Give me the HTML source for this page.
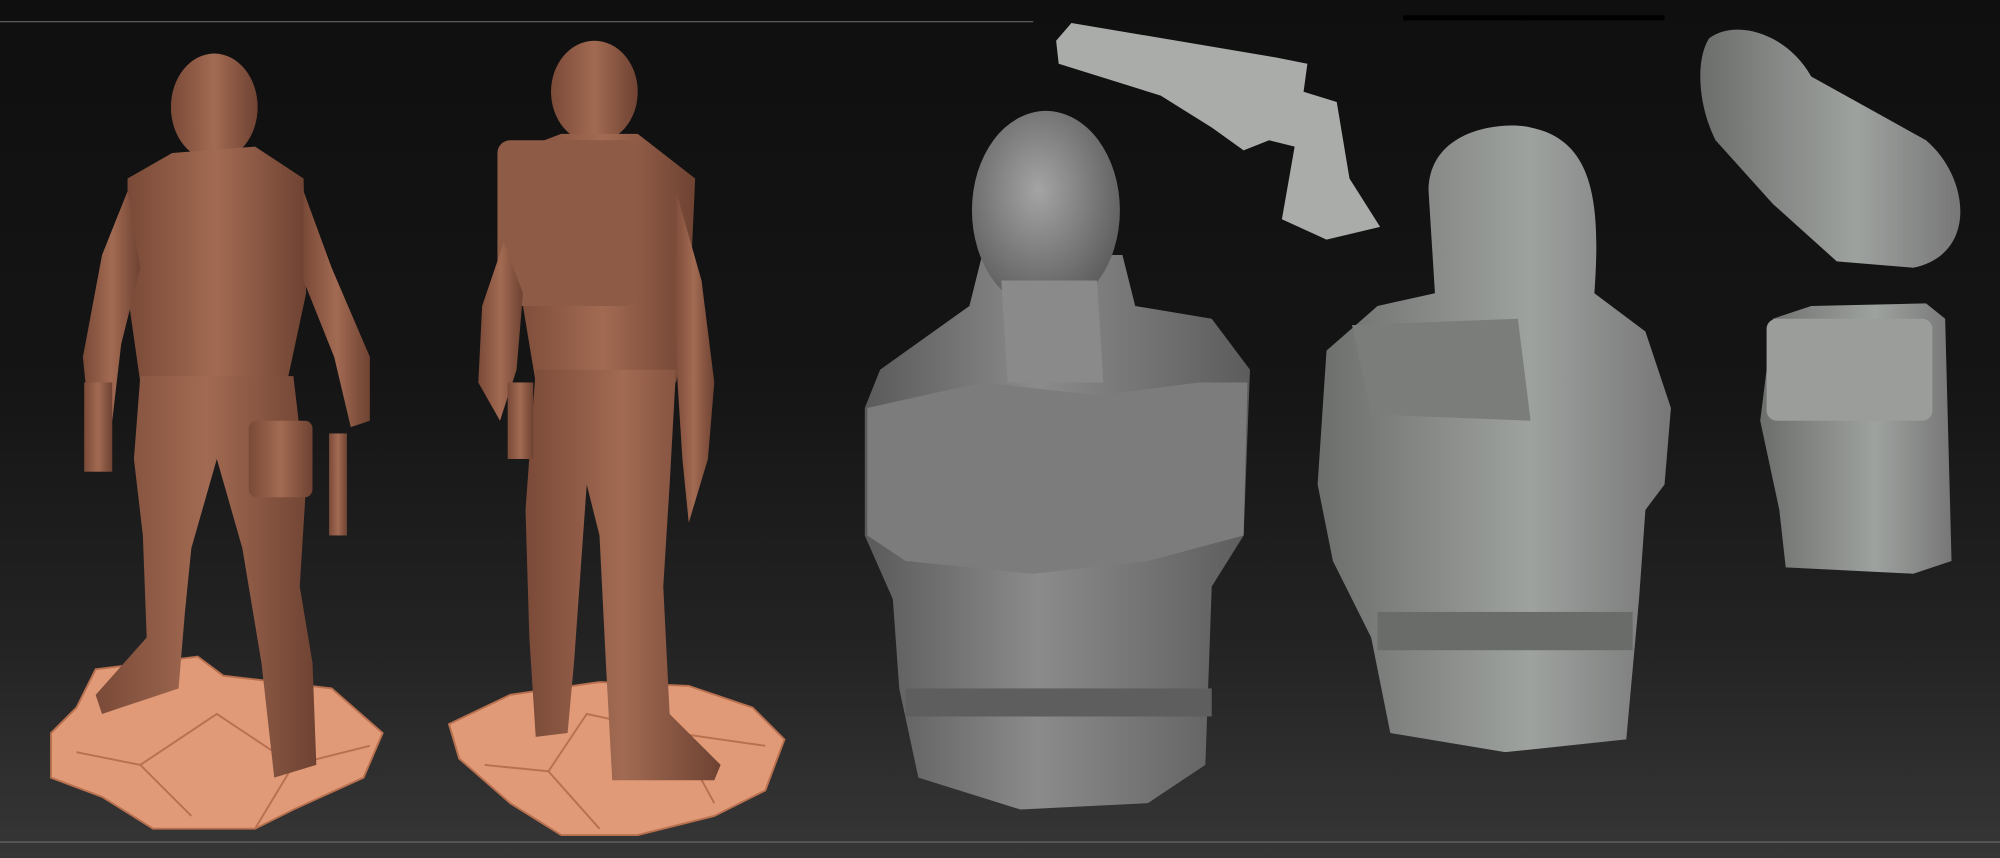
<!DOCTYPE html>
<html><head><meta charset="utf-8"><style>
html,body{margin:0;padding:0;background:#141414;overflow:hidden}
svg{display:block}
</style></head><body>
<svg width="2000" height="858" viewBox="0 0 1568 673" preserveAspectRatio="none" xmlns="http://www.w3.org/2000/svg">
<defs>
<linearGradient id="bg" x1="0" y1="0" x2="0" y2="1">
<stop offset="0" stop-color="#0f0f0f"/><stop offset="0.45" stop-color="#151515"/><stop offset="0.75" stop-color="#232323"/><stop offset="1" stop-color="#363636"/></linearGradient>
<linearGradient id="ter" x1="0" y1="0" x2="1" y2="0">
<stop offset="0" stop-color="#7a4a38"/><stop offset="0.5" stop-color="#a26a52"/><stop offset="1" stop-color="#6e4232"/></linearGradient>
<linearGradient id="gr" x1="0" y1="0" x2="1" y2="0">
<stop offset="0" stop-color="#5a5a5a"/><stop offset="0.45" stop-color="#8a8b8a"/><stop offset="1" stop-color="#5c5c5c"/></linearGradient>
<linearGradient id="gr2" x1="0" y1="0" x2="1" y2="0">
<stop offset="0" stop-color="#6c6e6c"/><stop offset="0.6" stop-color="#9ea29f"/><stop offset="1" stop-color="#777"/></linearGradient>
<radialGradient id="head" cx="0.45" cy="0.4" r="0.6"><stop offset="0" stop-color="#a4a4a4"/><stop offset="1" stop-color="#5e5e5e"/></radialGradient>
</defs>
<rect width="1568" height="673" fill="url(#bg)"/>
<rect x="0" y="16.5" width="810" height="1" fill="#5a5a5a"/>
<rect x="0" y="660" width="1568" height="1" fill="#666"/>
<rect x="1100" y="12" width="205" height="4" fill="#000"/>

<g fill="#e09a78" stroke="#b8704f" stroke-width="1.5">
<path d="M75 525 L155 515 L175 530 L260 540 L300 575 L285 610 L230 635 L200 650 L120 650 L80 625 L40 610 L40 575 L60 555 Z"/>
<path d="M400 545 L470 535 L540 538 L590 555 L615 580 L600 620 L560 640 L500 655 L440 655 L400 630 L360 595 L352 568 Z"/>
</g>
<g stroke="#b8704f" stroke-width="1.5" fill="none">
<path d="M60 590 L110 600 L150 640 M110 600 L170 560 L230 600 L200 650 M230 600 L290 585"/>
<path d="M380 600 L430 605 L470 650 M430 605 L460 560 L530 575 L560 630 M530 575 L600 585"/>
</g>
<g fill="url(#ter)">
<ellipse cx="168" cy="84" rx="34" ry="42"/>
<path d="M100 140 L135 120 L200 115 L238 140 L240 230 L225 300 L110 300 L100 230 Z"/>
<path d="M100 150 L80 200 L65 280 L70 330 L88 330 L95 270 L110 210 Z"/>
<path d="M238 150 L260 210 L290 280 L290 330 L275 335 L262 280 L238 220 Z"/>
<path d="M110 295 L230 295 L240 380 L235 460 L245 520 L248 600 L215 610 L205 520 L190 430 L170 360 L150 430 L145 480 L140 540 L80 560 L75 545 L115 500 L112 420 L105 360 Z"/>
<rect x="195" y="330" width="50" height="60" rx="6"/>
<rect x="66" y="300" width="22" height="70"/>
<rect x="258" y="340" width="14" height="80"/>
</g>
<g fill="url(#ter)">
<ellipse cx="466" cy="72" rx="34" ry="40"/>
<path d="M400 120 L440 105 L500 105 L545 140 L540 250 L530 300 L420 300 L410 240 Z"/>
<rect x="390" y="110" width="110" height="130" rx="10" fill="#8d5b46"/>
<path d="M395 190 L378 240 L375 300 L392 330 L405 290 L410 230 Z"/>
<path d="M530 150 L550 220 L560 300 L555 360 L540 410 L535 360 L528 250 Z"/>
<path d="M420 290 L530 290 L525 380 L520 460 L525 560 L565 600 L560 612 L480 612 L475 520 L470 420 L460 380 L455 450 L450 520 L445 575 L420 578 L415 500 L412 400 Z"/>
<rect x="398" y="300" width="20" height="60"/>
</g>
<path d="M690 290 L760 240 L770 200 L880 200 L890 240 L950 250 L980 290 L975 420 L950 460 L945 600 L900 630 L800 635 L720 610 L705 540 L700 470 L678 420 L678 320 Z" fill="url(#gr)"/>
<path d="M680 320 L770 300 L860 310 L940 300 L978 300 L975 420 L900 440 L810 450 L710 440 L680 420 Z" fill="#7b7c7b"/>
<ellipse cx="820" cy="165" rx="58" ry="78" fill="url(#head)"/>
<path d="M785 220 L860 220 L865 300 L790 300 Z" fill="#8a8a8a"/>
<rect x="710" y="540" width="240" height="22" fill="#5e5e5e"/>
<path d="M828 32 L840 18 L1000 45 L1025 50 L1022 72 L1048 80 L1058 140 L1082 178 L1040 188 L1005 172 L1015 115 L995 110 L975 118 L950 100 L910 75 L830 50 Z" fill="#a9aca9"/>
<path d="M1120 150 C1120 100 1180 95 1200 100 C1250 110 1255 160 1250 230 L1290 260 L1310 320 L1305 380 L1290 400 L1285 470 L1275 580 L1180 590 L1090 575 L1075 500 L1045 440 L1033 380 L1040 275 L1080 240 L1125 230 Z" fill="url(#gr2)"/>
<path d="M1060 255 L1190 250 L1200 330 L1075 325 Z" fill="#7a7d7a"/>
<rect x="1080" y="480" width="200" height="30" fill="#6a6c6a"/>
<path d="M1340 30 C1360 15 1400 25 1420 60 L1510 110 C1545 140 1550 200 1500 210 L1440 205 L1390 160 L1345 110 C1330 80 1330 45 1340 30 Z" fill="url(#gr2)"/>
<path d="M1390 250 L1420 240 L1510 238 L1525 250 L1530 440 L1500 450 L1400 445 L1395 400 L1380 330 Z" fill="url(#gr2)"/>
<rect x="1385" y="250" width="130" height="80" rx="8" fill="#9a9d9a"/>
</svg>
</body></html>
